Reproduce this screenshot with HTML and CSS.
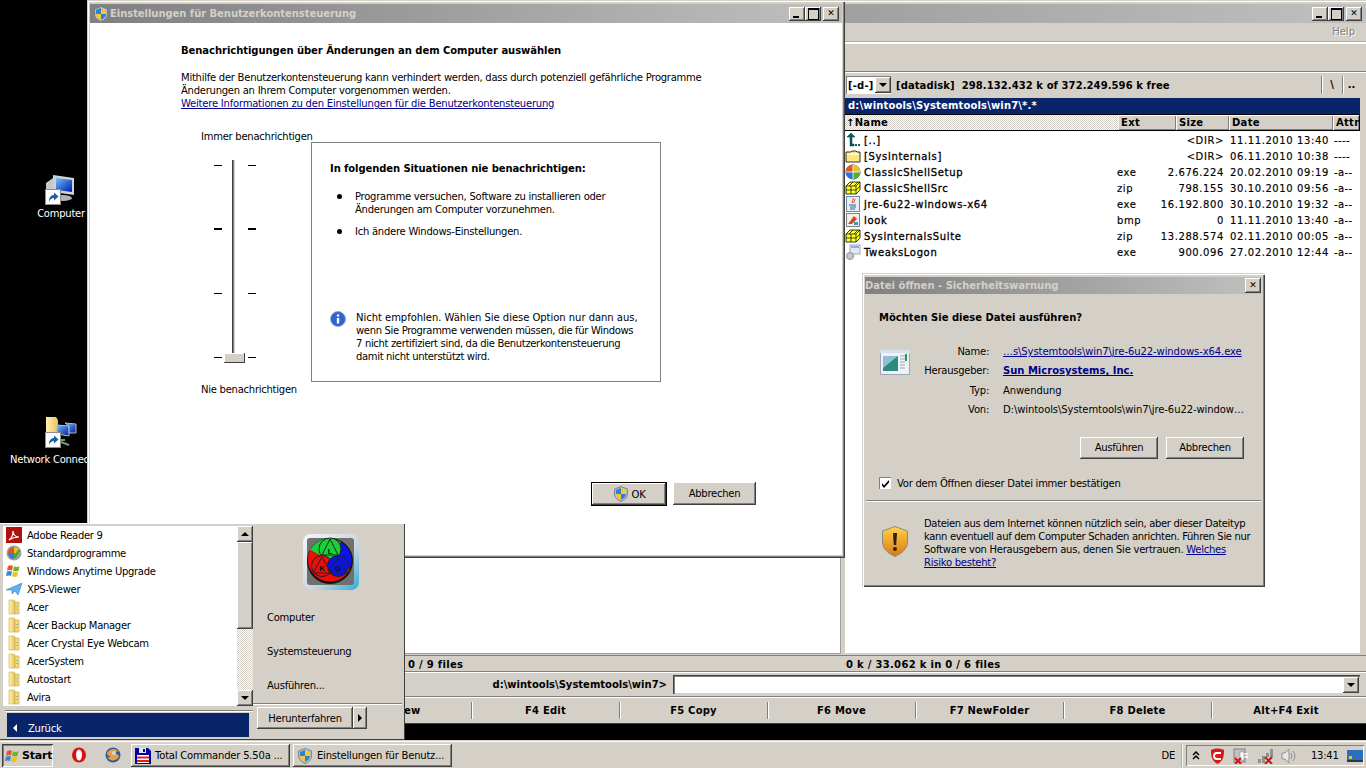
FILE: index.html
```html
<!DOCTYPE html>
<html lang="de">
<head>
<meta charset="utf-8">
<title>Desktop</title>
<link rel="stylesheet" href="styles.css">
</head>
<body>
<svg class="defs" width="0" height="0" aria-hidden="true">
  <defs>
    <linearGradient id="fold" x1="0" x2="1" y1="0" y2="0"><stop offset="0" stop-color="#fff3b0"/><stop offset="1" stop-color="#e8c35a"/></linearGradient>
    <linearGradient id="shld" x1="0" x2="0" y1="0" y2="1"><stop offset="0" stop-color="#ffd24a"/><stop offset="1" stop-color="#d97a10"/></linearGradient>
    <linearGradient id="scr" x1="0" x2="1" y1="0" y2="1"><stop offset="0" stop-color="#6ec0ff"/><stop offset="1" stop-color="#0018a8"/></linearGradient>
    <linearGradient id="frame" x1="0" x2="1" y1="0" y2="1"><stop offset="0" stop-color="#f4f6f8"/><stop offset=".6" stop-color="#c8d4dc"/><stop offset="1" stop-color="#28b0d8"/></linearGradient>
    <symbol id="shield" viewBox="0 0 16 16">
      <path d="M8 .5 14.500 3v5c0 3.800-3 6.200-6.500 7.500C4.500 14.200 1.500 11.800 1.500 8V3z" fill="#b8bcc0" stroke="#70767c" stroke-width=".8"/>
      <path d="M8 2 3 3.900V8h5z" fill="#2a7fe0"/><path d="M8 2v6h5V3.900z" fill="#f7c92c"/>
      <path d="M3 8c.2 2.800 2.300 4.600 5 5.700V8z" fill="#f7c92c"/><path d="M13 8c-.2 2.800-2.300 4.600-5 5.700V8z" fill="#2a7fe0"/>
    </symbol>
    <symbol id="menufolder" viewBox="0 0 16 16">
      <path d="M3 1h5l1 1v13H3z" fill="url(#fold)" stroke="#c9a94e" stroke-width=".6"/>
      <path d="M9 3h4v12H9z" fill="#f5d67a" stroke="#c9a94e" stroke-width=".6"/>
      <path d="M11 7v1M11 10v1" stroke="#4aa0e0"/>
    </symbol>
    <symbol id="zip" viewBox="0 0 16 16">
      <path d="M1 6 5 2h10v8l-4 4H1z" fill="#ffff30" stroke="#000" stroke-width=".8"/>
      <path d="M1 6h10v8M11 6l4-4M6 6v8M1 10h10M11 10l4-4M8 2 4 6M13 2 9 6" fill="none" stroke="#000" stroke-width=".7"/>
    </symbol>
    <symbol id="shortcut" viewBox="0 0 16 16">
      <rect x=".5" y=".5" width="15" height="15" fill="#fff" stroke="#8a8a8a"/>
      <path d="M4 13c0-5 2-7 5-7V3.500L13.500 7.500 9 11.500V9c-2 0-4 1-5 4z" fill="#1f5fa8"/>
    </symbol>
    <symbol id="flag" viewBox="0 0 16 16">
      <path d="M2 3c2-1 3.500-1 5 0L6 7.500C4.500 6.700 3 6.700 1 7.500z" fill="#e4572e"/>
      <path d="M8 3.300c2 1 3.500 1 5.500 0l-1 4.500c-2 .8-3.500.8-5.500 0z" fill="#6fb52c"/>
      <path d="M1 8.500c2-.8 3.500-.8 5 0l-1 4.500c-1.500-.8-3-.8-5 0z" fill="#2f88e0"/>
      <path d="M7 8.800c2 1 3.500 1 5.300 0l-1 4.500c-2 .8-3.500.8-5.300 0z" fill="#f4c01e"/>
    </symbol>
  </defs>
</svg>

<div class="screen">
  <main class="desktop">
    <div class="desk-icon desk-computer">
      <svg class="desk-img" viewBox="0 0 32 32"><path d="M1 10 8 5v16l-7 2z" fill="#c8c8c8"/><path d="M8 2 29 5v17L8 19z" fill="#d0d0d8"/><path d="M11 5 27 7v12L11 17z" fill="url(#scr)"/><ellipse cx="18" cy="25" rx="9" ry="3" fill="#b0b0b8"/><use href="#shortcut" x="0" y="16" width="16" height="16"/></svg>
      <span>Computer</span>
    </div>
    <div class="desk-icon desk-network">
      <svg class="desk-img" viewBox="0 0 32 32"><path d="M1 1h10l2 3v14H1z" fill="url(#fold)"/><path d="M12 9l12 1v10l-12-2z" fill="url(#scr)" stroke="#bbb"/><path d="M20 7l11 1v9l-7 0V10z" fill="url(#scr)" stroke="#bbb"/><path d="M16 26l8 3" stroke="#888" stroke-width="2"/><path d="M16 24h4" stroke="#2fc060" stroke-width="2"/><use href="#shortcut" x="0" y="16" width="16" height="16"/></svg>
      <span class="desk-cut">Network Connections</span>
    </div>

    <section class="window tc">
      <header class="titlebar tc-title">
        <span class="caption"></span>
        <div class="wbtns">
          <span class="wbtn wmin"></span><span class="wbtn wmax"></span><span class="wbtn wclose">✕</span>
        </div>
      </header>
      <nav class="tc-menu"><span class="help">Help</span></nav>
      <div class="tc-toolbar"></div>
      <div class="panels">
        <div class="panel panel-left"><div class="list"></div></div>
        <div class="panel panel-right">
          <div class="drive">
            <div class="combo"><span class="combo-val">[-d-]</span><span class="combo-arrow"></span></div>
            <span class="drive-info">[datadisk]&nbsp; 298.132.432 k of 372.249.596 k free</span>
            <span class="drive-btn">\</span><span class="drive-btn drive-up">..</span>
          </div>
          <div class="pathbar">d:\wintools\Systemtools\win7\*.*</div>
          <div class="cols heads">
            <span class="head head-name">↑Name</span><span class="head">Ext</span><span class="head">Size</span><span class="head">Date</span><span class="head">Attr</span>
          </div>
          <div class="list files">
            <div class="cols row">
              <svg class="ficon" viewBox="0 0 16 16"><path d="M5 14V5H2l4-4 4 4H7v7h2v2z" fill="#006060" stroke="#003838" stroke-width=".5"/><path d="M10 12h2v2h-2zM13 12h2v2h-2z" fill="#006060"/></svg>
              <span class="fname">[..]</span><span></span><span class="fsize">&lt;DIR&gt;</span><span>11.11.2010 13:40</span><span>----</span>
            </div>
            <div class="cols row">
              <svg class="ficon" viewBox="0 0 16 16"><path d="M1 4h5l1-1h4l1 1h3v10H1z" fill="#ffe680" stroke="#000" stroke-width=".8"/><path d="M2 5h12v2H2z" fill="#fff6c0"/></svg>
              <span class="fname">[Sysinternals]</span><span></span><span class="fsize">&lt;DIR&gt;</span><span>06.11.2010 10:38</span><span>----</span>
            </div>
            <div class="cols row">
              <svg class="ficon" viewBox="0 0 16 16"><circle cx="8" cy="8" r="7.500" fill="#2f6fd0"/><path d="M8 .5A7.500 7.500 0 0 0 .5 8H8z" fill="#e05a20"/><path d="M8 .5A7.500 7.500 0 0 1 15.500 8H8z" fill="#f0c020"/><path d="M8 8h7.500A7.500 7.500 0 0 1 8 15.500z" fill="#50b030"/><path d="M8 1v14M1 8h14" stroke="#fff" stroke-width=".8"/></svg>
              <span class="fname">ClassicShellSetup</span><span>exe</span><span class="fsize">2.676.224</span><span>20.02.2010 09:19</span><span>-a--</span>
            </div>
            <div class="cols row">
              <svg class="ficon"><use href="#zip"/></svg>
              <span class="fname">ClassicShellSrc</span><span>zip</span><span class="fsize">798.155</span><span>30.10.2010 09:56</span><span>-a--</span>
            </div>
            <div class="cols row">
              <svg class="ficon" viewBox="0 0 16 16"><rect x="1.500" y=".5" width="13" height="15" fill="#e8eef8" stroke="#7088a8"/><path d="M8 2c1 2-2 3-.5 5M10 3c0 2-2 2-1 4" fill="none" stroke="#d04020"/><path d="M4 9h7M5 11h6M5 13h5" stroke="#3060a0"/></svg>
              <span class="fname">jre-6u22-windows-x64</span><span>exe</span><span class="fsize">16.192.800</span><span>30.10.2010 19:32</span><span>-a--</span>
            </div>
            <div class="cols row">
              <svg class="ficon" viewBox="0 0 16 16"><rect x="1.500" y="1.500" width="13" height="13" fill="#f4f0e8" stroke="#808080"/><path d="M3 12 9 4l3 3-5 5z" fill="#d04a20"/><path d="M9 10h4v3H9z" fill="#4a90d0"/></svg>
              <span class="fname">look</span><span>bmp</span><span class="fsize">0</span><span>11.11.2010 13:40</span><span>-a--</span>
            </div>
            <div class="cols row">
              <svg class="ficon"><use href="#zip"/></svg>
              <span class="fname">SysinternalsSuite</span><span>zip</span><span class="fsize">13.288.574</span><span>02.11.2010 00:05</span><span>-a--</span>
            </div>
            <div class="cols row">
              <svg class="ficon" viewBox="0 0 16 16"><rect x="5" y="1" width="10" height="9" fill="#e0e8f4" stroke="#a0a8b8"/><rect x="6" y="2" width="8" height="2" fill="#90b0e0"/><circle cx="5" cy="12" r="3.500" fill="#c8c8c8" stroke="#909090"/></svg>
              <span class="fname">TweaksLogon</span><span>exe</span><span class="fsize">900.096</span><span>27.02.2010 12:44</span><span>-a--</span>
            </div>
          </div>
        </div>
      </div>
      <div class="status">
        <span class="status-left">0 / 9 files</span>
        <span class="status-right">0 k / 33.062 k in 0 / 6 files</span>
      </div>
      <div class="cmdline">
        <span class="cmd-path">d:\wintools\Systemtools\win7&gt;</span>
        <div class="cmd-input"><span class="combo-arrow cmd-arrow"></span></div>
      </div>
      <div class="fkeys">
        <span class="fkey">F3 View</span><span class="fkey">F4 Edit</span><span class="fkey">F5 Copy</span><span class="fkey">F6 Move</span><span class="fkey">F7 NewFolder</span><span class="fkey">F8 Delete</span><span class="fkey">Alt+F4 Exit</span>
      </div>
    </section>

    <section class="window uac">
      <header class="titlebar uac-title">
        <svg class="title-icon"><use href="#shield"/></svg>
        <span class="caption">Einstellungen für Benutzerkontensteuerung</span>
        <div class="wbtns">
          <span class="wbtn wmin"></span><span class="wbtn wmax"></span><span class="wbtn wclose">✕</span>
        </div>
      </header>
      <div class="uac-client">
        <h1 class="uac-h">Benachrichtigungen über Änderungen an dem Computer auswählen</h1>
        <p class="uac-p">Mithilfe der Benutzerkontensteuerung kann verhindert werden, dass durch potenziell gefährliche Programme<br>Änderungen an Ihrem Computer vorgenommen werden.<br><a class="link">Weitere Informationen zu den Einstellungen für die Benutzerkontensteuerung</a></p>
        <div class="uac-body">
          <div class="slider-col">
            <div class="slider-label">Immer benachrichtigen</div>
            <div class="slider">
              <div class="tick-row"><i class="tick"></i><i class="tick"></i></div>
              <div class="tick-row major"><i class="tick"></i><i class="tick"></i></div>
              <div class="tick-row"><i class="tick"></i><i class="tick"></i></div>
              <div class="tick-row last"><i class="tick"></i><i class="tick"></i></div>
              <div class="track"></div>
              <div class="thumb"></div>
            </div>
            <div class="slider-label">Nie benachrichtigen</div>
          </div>
          <div class="uac-box">
            <h2 class="box-h">In folgenden Situationen nie benachrichtigen:</h2>
            <ul class="box-list">
              <li>Programme versuchen, Software zu installieren oder<br>Änderungen am Computer vorzunehmen.</li>
              <li>Ich ändere Windows-Einstellungen.</li>
            </ul>
            <div class="box-info">
              <svg class="info-icon" viewBox="0 0 16 16"><circle cx="8" cy="8" r="7.500" fill="#2a66d0" stroke="#9aa8c0"/><circle cx="8" cy="4.500" r="1.300" fill="#fff"/><path d="M6.800 7h2.400v5.500H6.800z" fill="#fff"/></svg>
              <p class="tight"><span class="loose">Nicht empfohlen. Wählen Sie diese Option nur dann aus,</span><br>wenn Sie Programme verwenden müssen, die für Windows<br>7 nicht zertifiziert sind, da die Benutzerkontensteuerung<br>damit nicht unterstützt wird.</p>
            </div>
          </div>
        </div>
        <div class="uac-buttons">
          <button class="btn btn-ok"><svg class="btn-shield"><use href="#shield"/></svg>OK</button>
          <button class="btn btn-cancel">Abbrechen</button>
        </div>
      </div>
    </section>

    <section class="window sec">
      <header class="titlebar sec-title">
        <span class="caption">Datei öffnen - Sicherheitswarnung</span>
        <span class="wbtn wclose sec-close">✕</span>
      </header>
      <div class="sec-client">
        <h2 class="sec-h">Möchten Sie diese Datei ausführen?</h2>
        <div class="sec-info">
          <svg class="sec-app" viewBox="0 0 30 26"><rect x=".5" y=".5" width="29" height="24" fill="#eef2f8" stroke="#a0a8b8"/><path d="M0 0h30v3H0z" fill="#d8e0ec"/><path d="M3 6h15v15H3z" fill="#2e8a7a"/><path d="M3 6h15L3 18z" fill="#8cc0d8"/><path d="M20 6h5M20 9h5M20 12h5M20 15h5M20 18h5" stroke="#a0a8b0"/><path d="M26 4v7" stroke="#2a9a50" stroke-width="2"/></svg>
          <dl class="sec-grid">
            <dt>Name:</dt><dd><a class="link">…s\Systemtools\win7\jre-6u22-windows-x64.exe</a></dd>
            <dt>Herausgeber:</dt><dd><a class="link link-bold">Sun Microsystems, Inc.</a></dd>
            <dt>Typ:</dt><dd>Anwendung</dd>
            <dt>Von:</dt><dd>D:\wintools\Systemtools\win7\jre-6u22-window…</dd>
          </dl>
        </div>
        <div class="sec-buttons">
          <button class="btn btn-sec">Ausführen</button>
          <button class="btn btn-sec">Abbrechen</button>
        </div>
        <label class="sec-check"><span class="checkbox"><svg viewBox="0 0 11 11"><path d="M2 5l2 2.500L9 2v2.500L4 10 2 7.500z" fill="#000"/></svg></span>Vor dem Öffnen dieser Datei immer bestätigen</label>
        <div class="sec-sep"></div>
        <div class="sec-warn">
          <svg class="warn-icon" viewBox="0 0 26 31"><path d="M13 .5 25.500 5v11c0 7-6 11.500-12.500 14.500C6.500 27.500.5 23 .5 16V5z" fill="url(#shld)" stroke="#8a8a80"/><path d="M11 7h4l-.8 12h-2.400z" fill="#302010"/><circle cx="13" cy="23" r="2" fill="#302010"/></svg>
          <p><span class="tight">Dateien aus dem Internet können nützlich sein, aber dieser Dateityp<br>kann eventuell auf dem Computer Schaden anrichten. Führen Sie nur</span><br>Software von Herausgebern aus, denen Sie vertrauen. <a class="link">Welches<br>Risiko besteht?</a></p>
        </div>
      </div>
    </section>

    <section class="window startmenu">
      <div class="sm-left">
        <div class="sm-listwrap">
          <ul class="sm-list">
            <li><svg class="sm-icon" viewBox="0 0 16 16"><rect x="0" y="0" width="16" height="16" fill="#b01010"/><path d="M3 13c3-2 4-6 4-9 0 3 2 6 6 6-3 0-7 1-10 3z" fill="none" stroke="#fff" stroke-width="1.200"/></svg>Adobe Reader 9</li>
            <li><svg class="sm-icon" viewBox="0 0 16 16"><circle cx="8" cy="8" r="7.500" fill="#9aa0a0"/><path d="M8 2a6 6 0 0 0-6 6h6z" fill="#e05020"/><path d="M8 2a6 6 0 0 1 6 6H8z" fill="#f0c020"/><path d="M2 8a6 6 0 0 0 6 6V8z" fill="#3080e0"/><path d="M7 10l2 3 5-7-2-1-3 5-1-1z" fill="#40c020" stroke="#208010" stroke-width=".4"/></svg>Standardprogramme</li>
            <li><svg class="sm-icon"><use href="#flag"/></svg>Windows Anytime Upgrade</li>
            <li><svg class="sm-icon" viewBox="0 0 16 16"><path d="M0 9 16 2l-4 12-3-4-3 3V9z" fill="#60b0f0" stroke="#2070b8" stroke-width=".5"/></svg>XPS-Viewer</li>
            <li><svg class="sm-icon"><use href="#menufolder"/></svg>Acer</li>
            <li><svg class="sm-icon"><use href="#menufolder"/></svg>Acer Backup Manager</li>
            <li><svg class="sm-icon"><use href="#menufolder"/></svg>Acer Crystal Eye Webcam</li>
            <li><svg class="sm-icon"><use href="#menufolder"/></svg>AcerSystem</li>
            <li><svg class="sm-icon"><use href="#menufolder"/></svg>Autostart</li>
            <li><svg class="sm-icon"><use href="#menufolder"/></svg>Avira</li>
          </ul>
          <div class="scrollbar">
            <span class="sb-btn"><i class="arrow-up"></i></span>
            <span class="sb-thumb"></span>
            <span class="sb-track"></span>
            <span class="sb-btn"><i class="arrow-down"></i></span>
          </div>
        </div>
        <div class="sm-back"><i class="arrow-left"></i>Zurück</div>
      </div>
      <div class="sm-right">
        <svg class="sm-logo" viewBox="0 0 58 58">
          <rect x="1" y="1" width="56" height="56" rx="8" fill="url(#frame)"/>
          <rect x="5" y="5" width="47" height="47" rx="3" fill="#707070"/>
          <circle cx="28" cy="28" r="23" fill="#111"/>
          <path d="M28 28 8 17A22 22 0 0 1 39 9z" fill="#18d038"/>
          <path d="M28 28 39 9A22 22 0 0 1 48 36z" fill="#0a14e8"/>
          <path d="M28 28 48 36A22 22 0 0 1 8 17z" fill="#f00c0c"/>
          <circle cx="28" cy="16" r="11" fill="#18d038" stroke="#222"/>
          <circle cx="20" cy="33" r="10.500" fill="#f00c0c" stroke="#222"/>
          <circle cx="36" cy="33" r="10.500" fill="#0a14e8" stroke="#222"/>
          <path d="M28 6 20 22h16zM20 24 11 40h18zM36 24 27 40h18z" fill="none" stroke="#222" stroke-width="1"/>
          <text x="28" y="21" class="logo-t">L</text><text x="20" y="38" class="logo-t">K</text><text x="36" y="38" class="logo-t">O</text>
        </svg>
        <ul class="sm-links">
          <li>Computer</li>
          <li>Systemsteuerung</li>
          <li>Ausführen...</li>
        </ul>
        <div class="sm-sep"></div>
        <div class="sm-shutdown"><span class="btn shut-main">Herunterfahren</span><span class="btn shut-arrow"><i class="arrow-right"></i></span></div>
      </div>
    </section>
  </main>

  <footer class="taskbar">
    <div class="start"><svg class="start-flag"><use href="#flag"/></svg>Start</div>
    <div class="quick">
      <svg class="q-icon" viewBox="0 0 16 16"><ellipse cx="8" cy="8" rx="7" ry="7.500" fill="#d81010"/><ellipse cx="8" cy="8" rx="3" ry="5.500" fill="#fff"/></svg>
      <svg class="q-icon" viewBox="0 0 16 16"><circle cx="8" cy="8" r="7.500" fill="#2a5aa8"/><path d="M2 6c3-5 9-5 12-1-3-1-5 0-5 2 3-1 5 1 5 3-3 4-9 5-12 0 2 1 3 0 3-1C3 9 2 8 2 6z" fill="#e8a040"/><circle cx="9" cy="6" r="2" fill="#c8d8f0"/></svg>
    </div>
    <div class="task">
      <svg class="task-icon" viewBox="0 0 16 16"><path d="M0 0h13l3 3v13H0z" fill="#0000a8"/><path d="M4 0h7v5H4z" fill="#e8e8f0"/><path d="M8 1h2v3H8z" fill="#000080"/><path d="M2 7h12v8H2z" fill="#fff"/><path d="M2 8.500h12v2H2zM2 12h12v2H2z" fill="#e02020"/></svg>
      <span>Total Commander 5.50a ...</span>
    </div>
    <div class="task">
      <svg class="task-icon"><use href="#shield"/></svg>
      <span>Einstellungen für Benutz...</span>
    </div>
    <span class="lang">DE</span>
    <div class="tray">
      <svg class="tr-chev" viewBox="0 0 8 9"><path d="M1 4l3-3 3 3M1 8l3-3 3 3" fill="none" stroke="#000" stroke-width="1.500"/></svg>
      <svg class="tr-c" viewBox="0 0 15 16"><path d="M1 2c4-2 9-2 13 0 0 7-1 11-6.500 14C2 13 1 9 1 2z" fill="#d81818"/><path d="M11 5H7Q4 5 4 8t3 3h4" fill="none" stroke="#fff" stroke-width="2"/></svg>
      <svg class="tr-plug" viewBox="0 0 16 16"><rect x="1" y="1" width="11" height="13" fill="#c0c0c0" stroke="#808080"/><path d="M9 6h6M9 9h6" stroke="#fff" stroke-width="1.500"/><path d="M7 4h4v8H7z" fill="#fff" stroke="#808080" stroke-width=".5"/><path d="M2 10l6 6M8 10l-6 6" stroke="#d81010" stroke-width="2"/></svg>
      <svg class="tr-net" viewBox="0 0 16 16"><path d="M1 11h3v4H1zM5 8h3v7H5zM9 5h3v4H9zM13 1h3v8h-3z" fill="#909090"/><path d="M8 9l7 7M15 9l-7 7" stroke="#d81010" stroke-width="2"/></svg>
      <svg class="tr-spk" viewBox="0 0 16 16"><path d="M1 5h3l4-4v14l-4-4H1z" fill="#e8e8e8" stroke="#909090"/><path d="M10 5q2 3 0 6M12 3q4 5 0 10" fill="none" stroke="#909090"/></svg>
      <span class="clock">13:41</span>
      <svg class="tr-desk" viewBox="0 0 16 16"><rect width="16" height="12" y="2" fill="#2a70c0"/><path d="M0 12h16v2H0z" fill="#303848"/><path d="M2 8h3v3H2z" fill="#f0c020"/></svg>
    </div>
  </footer>
</div>
</body>
</html>
```
FILE: styles.css
```css
* { box-sizing: border-box; }
html, body { margin: 0; padding: 0; height: 100%; overflow: hidden; }
body { font: 10px/13px "DejaVu Sans", Verdana, sans-serif; letter-spacing: -.25px; color: #000; background: #000; }
.defs { position: absolute; }
ul, dl, dd, p, h1, h2 { margin: 0; padding: 0; }
li { list-style: none; }
.screen { width: 1366px; height: 768px; display: flex; flex-direction: column; }
.desktop { position: relative; height: 740px; background: #000; overflow: hidden; }
.tight { letter-spacing: -.33px; }
.loose { letter-spacing: -.03px; }

/* desktop icons */
.desk-icon { position: absolute; color: #fff; display: flex; flex-direction: column; align-items: center; }
.desk-computer { left: 21px; top: 173px; width: 80px; }
.desk-network { left: 1px; top: 416px; width: 120px; white-space: nowrap; }
.desk-img { width: 32px; height: 32px; margin-bottom: 2px; }
.desk-network .desk-img { margin-bottom: 5px; }

/* windows */
.window { position: absolute; background: #d4d0c8; }
.titlebar { display: flex; align-items: center; height: 19px; color: #d4d0c8; font-weight: bold; letter-spacing: 0; }
.title-icon { width: 16px; height: 16px; margin: 0 1px 0 3px; flex: none; }
.caption { flex: 1; white-space: nowrap; overflow: hidden; }
.uac-title .caption { letter-spacing: -.05px; }
.wbtns { display: flex; flex: none; }
.wbtn {
  width: 16px; height: 14px; background: #d4d0c8; display: flex; align-items: center; justify-content: center;
  box-shadow: inset -1px -1px #404040, inset 1px 1px #fff, inset -2px -2px #808080;
  font-size: 9px; font-weight: bold; color: #000; position: relative;
}
.wclose { margin-left: 2px; }
.wmin::after { content: ""; width: 6px; height: 2px; background: #000; margin-top: 6px; margin-right: 2px; }
.wmax::after { content: ""; width: 9px; height: 9px; border: 1px solid #000; border-top-width: 2px; }

/* Total Commander */
.tc {
  left: 320px; top: 0; width: 1046px; height: 724px; padding: 4px 0 2px 4px;
  box-shadow: inset 0 1px #d4d0c8, inset 0 2px #fff, inset 0 -1px #404040;
  display: flex; flex-direction: column; letter-spacing: 0;
}
.tc-title { background: linear-gradient(90deg, #808080, #c0c0c0); margin-left: -2px; padding-right: 4px; }
.tc-title .wbtns { margin-left: auto; }
.tc-menu { height: 20px; display: flex; justify-content: flex-end; align-items: center; padding: 0 11px 1px 0; border-bottom: 2px groove #fff; box-shadow: 0 1px #fff; }
.help { color: #808080; text-shadow: 1px 1px #fff; font-weight: normal; }
.tc-toolbar { height: 29px; border-bottom: 1px solid #808080; box-shadow: 0 1px #fff; }
.panels { height: 583px; display: grid; grid-template-columns: 518px 515px; column-gap: 3px; padding-top: 1px; }
.panel { display: flex; flex-direction: column; min-height: 0; }
.list { background: #fff; box-shadow: inset 0 -2px #d4d0c8; flex: 1; }
.panel-left .list { box-shadow: inset -1px -1px #d4d0c8, inset -2px -2px #a0a0a0; }
.status, .cmdline, .fkeys, .drive, .pathbar, .heads { font-weight: bold; }
.drive { height: 25px; display: flex; align-items: center; padding: 0 0 1px 1px; }
.combo { width: 45px; height: 18px; background: #fff; display: flex; align-items: center; justify-content: space-between; padding-left: 2px; box-shadow: inset 1px 1px #808080; }
.combo-val { letter-spacing: .2px; }
.combo-arrow { width: 16px; height: 16px; background: #d4d0c8; position: relative; display: block; flex: none; box-shadow: inset -1px -1px #404040, inset 1px 1px #fff, inset -2px -2px #808080; }
.combo-arrow::after { content: ""; position: absolute; left: 4px; top: 6px; border: 4px solid transparent; border-top-color: #000; border-bottom-width: 0; }
.drive-info { margin-left: 5px; flex: 1; white-space: nowrap; letter-spacing: .08px; }
.drive-btn { width: 21px; height: 18px; border-left: 1px solid #808080; box-shadow: inset 1px 0 #fff; text-align: center; line-height: 17px; }
.drive-up { width: 18px; }
.pathbar { height: 16px; background: #0a246a; color: #fff; padding: 0 0 0 3px; line-height: 16px; letter-spacing: .15px; white-space: nowrap; }
.cols { display: grid; grid-template-columns: 273px 58px 53px 104px 26px; }
.heads { height: 17px; border: 1px solid #000; border-width: 1px 1px 1px 0; background: #d4d0c8; }
.head { padding-left: 3px; line-height: 15px; box-shadow: inset 1px 1px #fff, inset -1px -1px #808080; letter-spacing: .3px; }
.head-name { padding-left: 1px; background: repeating-conic-gradient(#fff 0 25%, #d4d0c8 0 50%) 0 0 / 2px 2px; box-shadow: none; }
.files { padding-top: 1px; }
.row { height: 16px; grid-template-columns: 19px 253px 37px 70px 110px 26px; align-items: center; letter-spacing: .6px; -webkit-text-stroke: .15px #000; }
.ficon { width: 16px; height: 16px; }
.fname { white-space: nowrap; letter-spacing: .65px; -webkit-text-stroke: .3px #000; }
.fsize { text-align: right; white-space: nowrap; }
.row span:nth-child(5) { padding-left: 6px; white-space: nowrap; }
.row span:nth-child(6) { white-space: nowrap; letter-spacing: .4px; }
.status { height: 17px; display: grid; grid-template-columns: 522px 1fr; align-items: center; border-top: 1px solid #808080; border-bottom: 1px solid #808080; box-shadow: 0 1px #fff; letter-spacing: .3px; padding-top: 2px; }
.status-left { padding-left: 84px; }
.cmdline { height: 24px; display: flex; align-items: center; justify-content: flex-end; padding: 0 6px 0 0; border-bottom: 1px solid #808080; box-shadow: 0 1px #fff; margin-top: 1px; }
.cmd-path { letter-spacing: 0; margin-right: 6px; white-space: nowrap; }
.cmd-input { width: 687px; height: 19px; background: #fff; display: flex; justify-content: flex-end; align-items: center; padding-right: 1px; box-shadow: inset 1px 1px #404040, inset 2px 2px #808080, inset -1px -1px #d4d0c8; }
.fkeys { flex: 1; display: grid; grid-template-columns: repeat(7, 148px); align-items: center; margin-top: 1px; padding-top: 1px; }
.fkey { text-align: center; line-height: 17px; border-right: 1px solid #808080; box-shadow: 1px 0 #fff; letter-spacing: .2px; white-space: nowrap; }
.fkey:last-child { border: 0; box-shadow: none; }

/* UAC */
.uac { left: 87px; top: 0; width: 758px; height: 558px; padding: 4px 3px 3px; box-shadow: inset 1px 1px #d4d0c8, inset 2px 2px #fff, inset -1px -1px #404040, inset -2px -2px #808080; }
.uac-title { background: linear-gradient(90deg, #808080, #c0c0c0); padding-right: 3px; }
.uac-client { background: #fff; height: 532px; padding: 21px 0 0 91px; }
.uac-h { font-size: 10px; line-height: 13px; font-weight: bold; white-space: nowrap; letter-spacing: -.05px; }
.uac-p { margin-top: 14px; white-space: nowrap; }
.uac-p .link { letter-spacing: -.21px; }
.link { color: #00008b; text-decoration: underline; }
.uac-body { margin-top: 20px; display: flex; }
.slider-col { width: 130px; padding-left: 20px; white-space: nowrap; }
.slider { position: relative; margin-left: -20px; padding: 22px 0 0 33px; }
.tick-row { height: 64px; display: flex; gap: 26px; }
.tick-row.last { height: 26px; }
.tick { display: block; width: 8px; height: 1px; background: #000; }
.major .tick { height: 2px; margin-top: -1px; }
.track { position: absolute; left: 51px; top: 17px; width: 3px; height: 194px; background: #808080; box-shadow: inset 1px 0 #404040, inset -1px 0 #d4d0c8; }
.thumb { position: absolute; left: 43px; top: 210px; width: 21px; height: 10px; background: #d4d0c8; box-shadow: inset -1px -1px #404040, inset 1px 1px #fff; }
.uac-box { width: 350px; height: 240px; margin-top: 12px; border: 1px solid #808080; padding: 19px 0 0 18px; white-space: nowrap; }
.box-h { font-size: 10px; line-height: 13px; font-weight: bold; letter-spacing: -.09px; }
.box-list { margin-top: 15px; padding-left: 25px; }
.box-list li { position: relative; margin-bottom: 9px; }
.box-list li::before { content: ""; position: absolute; left: -18px; top: 4px; width: 5px; height: 5px; border-radius: 50%; background: #000; }
.box-info { display: flex; margin-top: 64px; padding-top: 9px; }
.info-icon { width: 16px; height: 16px; margin-right: 10px; flex: none; }
.uac-buttons { display: flex; gap: 6px; margin-top: 86px; padding-left: 410px; align-items: flex-start; }
.btn { font: inherit; letter-spacing: inherit; color: #000; background: #d4d0c8; border: 0; padding: 0; box-shadow: inset -1px -1px #404040, inset 1px 1px #fff, inset -2px -2px #808080; display: flex; align-items: center; justify-content: center; }
.btn-ok { width: 76px; height: 24px; box-shadow: inset 0 0 0 1px #000, inset -2px -2px #404040, inset 2px 2px #fff, inset -3px -3px #808080; }
.btn-shield { width: 16px; height: 16px; margin-right: 3px; }
.btn-cancel { width: 83px; height: 23px; }

/* security dialog */
.sec { left: 862px; top: 273px; width: 403px; height: 314px; padding: 4px 4px 3px 3px; box-shadow: inset 1px 1px #d4d0c8, inset 2px 2px #fff, inset -1px -1px #404040, inset -2px -2px #808080; }
.sec-title { height: 17px; background: linear-gradient(90deg, #808080, #c0c0c0); position: relative; }
.sec-close { width: 16px; height: 15px; }
.sec-client { padding: 17px 0 0 14px; }
.sec-h { font-size: 10px; line-height: 13px; font-weight: bold; white-space: nowrap; letter-spacing: 0; }
.sec-info { display: flex; margin-top: 21px; }
.sec-app { width: 30px; height: 26px; margin: 5px 0 0 1px; flex: none; }
.sec-grid { display: grid; grid-template-columns: 79px 1fr; column-gap: 14px; row-gap: 6.300px; white-space: nowrap; }
.sec-grid dt { text-align: right; }
.sec-grid dd { letter-spacing: -.08px; }
.link-bold { font-weight: bold; letter-spacing: 0; }
.sec-buttons { display: flex; gap: 8px; justify-content: flex-end; padding-right: 17px; margin-top: 21px; }
.btn-sec { width: 78px; height: 22px; }
.sec-check { display: flex; align-items: center; margin-top: 18px; white-space: nowrap; }
.checkbox { width: 12px; height: 12px; background: #fff; margin-right: 6px; box-shadow: inset 1px 1px #808080, inset -1px -1px #fff; display: flex; align-items: center; justify-content: center; }
.checkbox svg { width: 11px; height: 11px; }
.sec-sep { height: 2px; margin: 10px 0 0 -13px; width: 395px; background: #808080; box-shadow: inset 0 -1px #fff; }
.sec-warn { display: flex; margin-top: 15px; margin-left: 3px; white-space: nowrap; }
.warn-icon { width: 26px; height: 31px; margin: 9px 16px 0 0; flex: none; }

/* start menu */
.startmenu { left: 0; top: 523px; width: 405px; height: 217px; display: flex; box-shadow: inset 0 1px #fff, inset -1px 0 #404040, inset 0 -1px #404040; padding: 3px; }
.sm-left { width: 251px; display: flex; flex-direction: column; }
.sm-listwrap { display: flex; height: 180px; }
.sm-list { width: 234px; background: #fff; letter-spacing: -.3px; }
.sm-list li { height: 18px; display: flex; align-items: center; padding-left: 3px; white-space: nowrap; }
.sm-icon { width: 16px; height: 16px; margin-right: 5px; flex: none; }
.scrollbar { width: 16px; display: flex; flex-direction: column; }
.sb-btn { height: 16px; display: flex; align-items: center; justify-content: center; background: #d4d0c8; box-shadow: inset -1px -1px #404040, inset 1px 1px #fff, inset -2px -2px #808080; }
.sb-thumb { height: 87px; background: #d4d0c8; box-shadow: inset -1px -1px #404040, inset 1px 1px #fff, inset -2px -2px #808080; }
.sb-track { flex: 1; background: repeating-conic-gradient(#fff 0 25%, #d4d0c8 0 50%) 0 0 / 2px 2px; }
.arrow-up { border: 4px solid transparent; border-bottom-color: #000; border-top-width: 0; }
.arrow-down { border: 4px solid transparent; border-top-color: #000; border-bottom-width: 0; }
.arrow-left { border: 4px solid transparent; border-right-color: #fff; border-left-width: 0; margin-right: 11px; }
.arrow-right { border: 4px solid transparent; border-left-color: #000; border-right-width: 0; }
.sm-back { margin: 7px 0 0 4px; height: 24px; width: 242px; background: #0a246a; color: #fff; display: flex; align-items: center; padding: 6px 0 0 6px; position: relative; }
.sm-back::before { content: ""; position: absolute; left: -2px; right: -4px; top: -3px; height: 2px; background: #808080; box-shadow: inset 0 -1px #fff; }
.sm-right { flex: 1; padding-top: 7px; display: flex; flex-direction: column; }
.sm-logo { width: 58px; height: 58px; margin-left: 48px; flex: none; }
.logo-t { font: bold 8px "Liberation Sans", sans-serif; text-anchor: middle; fill: #111; }
.sm-links { margin: 20px 0 0 13px; }
.sm-links li { height: 34px; line-height: 13px; white-space: nowrap; }
.sm-sep { height: 2px; background: #808080; box-shadow: inset 0 -1px #fff; margin-top: -10px; margin-left: -1px; }
.sm-shutdown { display: flex; margin: 2px 0 0 3px; }
.shut-main { width: 96px; height: 22px; }
.shut-arrow { width: 14px; height: 22px; }

/* taskbar */
.taskbar { height: 28px; background: #d4d0c8; box-shadow: inset 0 1px #fff; display: flex; align-items: flex-start; padding: 3px 2px 0 2px; position: relative; border-top: 1px solid #d4d0c8; }
.start { width: 51px; height: 23px; display: flex; align-items: center; font-size: 11px; font-weight: bold; letter-spacing: -.2px; padding-left: 3px; box-shadow: inset 1px 1px #404040, inset -1px -1px #fff, inset 2px 2px #808080; }
.start-flag { width: 16px; height: 16px; margin-right: 1px; }
.quick { display: flex; gap: 18px; padding: 3px 0 0 18px; width: 78px; }
.q-icon { width: 16px; height: 16px; flex: none; }
.task { width: 159px; height: 23px; display: flex; align-items: center; margin-right: 3px; padding-left: 4px; white-space: nowrap; letter-spacing: -.2px; box-shadow: inset -1px -1px #404040, inset 1px 1px #fff, inset -2px -2px #808080; }
.task-icon { width: 16px; height: 16px; margin-right: 4px; flex: none; }
.lang { margin-left: auto; line-height: 23px; border-right: 2px groove #fff; padding-right: 6px; }
.tray { width: 178px; height: 21px; margin: 1px 0 0 3px; display: flex; align-items: center; padding-left: 6px; box-shadow: inset 1px 1px #808080, inset -1px -1px #fff; position: relative; }
.tr-chev { width: 8px; height: 9px; margin-right: 10px; flex: none; }
.tr-c { width: 15px; height: 16px; margin-right: 8px; flex: none; }
.tr-plug, .tr-net, .tr-spk { width: 16px; height: 16px; flex: none; }
.tr-plug { margin-right: 8px; }
.tr-net { margin-right: 8px; }
.tr-spk { margin-right: 14px; }
.clock { width: 36px; }
.tr-desk { width: 16px; height: 16px; flex: none; }
```
